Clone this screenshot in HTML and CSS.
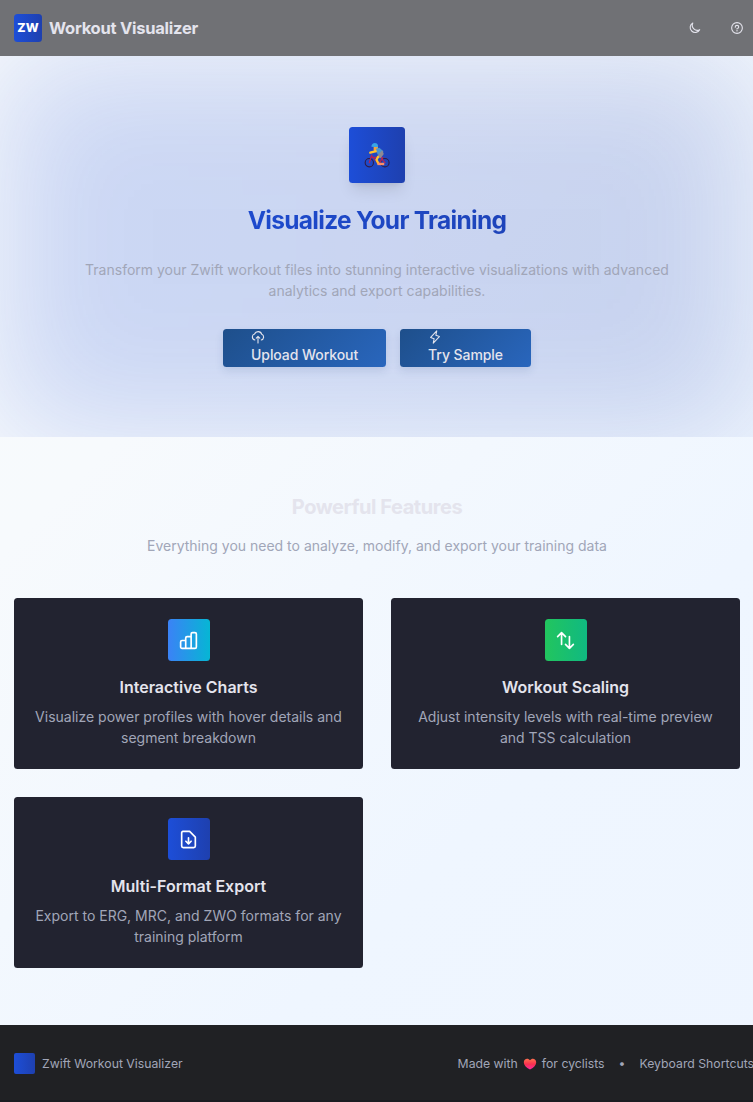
FILE: index.html
```html
<!DOCTYPE html>
<html lang="en">
<head>
<meta charset="utf-8">
<title>Workout Visualizer</title>
<link rel="stylesheet" href="styles.css">
</head>
<body>
<header class="topbar">
  <div class="brand"><span class="logo">ZW</span><span class="brand-name">Workout Visualizer</span></div>
  <nav class="actions">
    <svg class="icon-sm" viewBox="0 0 256 256"><path d="M88 36a92 92 0 0 0 126 122A92 92 0 1 1 88 36Z"/></svg>
    <svg class="icon-sm" viewBox="0 0 256 256"><circle cx="128" cy="128" r="98"/><path d="M128 144v-8c18 0 32-13 32-28s-14-28-32-28-32 13-32 28v4"/><circle cx="128" cy="178" r="5"/></svg>
  </nav>
</header>
<main>
  <section class="hero">
    <div class="hero-glow"></div>
    <div class="hero-content">
      <div class="hero-badge">
        <svg class="cyclist" viewBox="0 0 28 28">
          <g fill="none" stroke="#321b41" stroke-width="1.1"><circle cx="5.500" cy="21.500" r="4.300"/><circle cx="21.700" cy="21.500" r="4.300"/></g>
          <path d="M5.500 21.500 8 13.500M8.500 15l7 8 4-7M8.500 16h9l4.200 5.500" fill="none" stroke="#b52355" stroke-width="1.3"/>
          <path d="M10 5h4.500v4l-2 2-2.500-2.500z" fill="#f5a33b"/>
          <path d="M12.500 9.500 6.500 11" stroke="#ffc12e" stroke-width="2.4"/>
          <path d="m12.500 7 3.500-1 4 3.500-1 4.500-5-1z" fill="#4a94cf"/>
          <path d="m19 8.500 1.500 4-3 4-4-.5 1-2.500z" fill="#8d8992"/>
          <path d="m14.500 15.500-1.500 3 2 4" fill="none" stroke="#ffc12e" stroke-width="2.4"/>
          <path d="M14 21.500h7V24h-7z" fill="#ff8d65"/>
          <path d="M7.700 5C7.500.5 13.500-.3 14.500 3.500v2z" fill="#38a5e7"/>
        </svg>
      </div>
      <h1>Visualize Your Training</h1>
      <p class="hero-text">Transform your Zwift workout files into stunning interactive visualizations with advanced analytics and export capabilities.</p>
      <div class="buttons">
        <button class="btn"><svg class="icon-sm" viewBox="0 0 256 256"><path d="M72 182a56 56 0 0 1-7-109 70 70 0 0 1 132 6 54 54 0 0 1-11 103M128 238V116M96 148l32-32 32 32"/></svg><span>Upload Workout</span></button>
        <button class="btn"><svg class="icon-sm" viewBox="0 0 256 256"><path d="m96 240 16-80-64-24L160 16l-16 80 64 24Z"/></svg><span>Try Sample</span></button>
      </div>
    </div>
  </section>
  <section class="features">
    <h2>Powerful Features</h2>
    <p class="lead">Everything you need to analyze, modify, and export your training data</p>
    <div class="grid">
      <article class="card">
        <div class="tile tile-cyan"><svg class="icon" viewBox="0 0 24 24"><path d="M3 13.600C3 12.700 3.700 12 4.600 12H8.800v9H4.600C3.700 21 3 20.300 3 19.400zM8.800 9c0-.9.7-1.500 1.500-1.500H15V21H8.800zM15 4.600c0-.9.7-1.600 1.600-1.600h2.800c.9 0 1.600.7 1.600 1.600v14.800c0 .9-.7 1.600-1.600 1.600H15z"/></svg></div>
        <h3>Interactive Charts</h3>
        <p>Visualize power profiles with hover details and segment breakdown</p>
      </article>
      <article class="card">
        <div class="tile tile-green"><svg class="icon" viewBox="0 0 24 24"><path d="M3 7.500 7.500 3 12 7.500M7.500 3v13.500M21 16.500 16.500 21 12 16.500M16.500 21V7.500"/></svg></div>
        <h3>Workout Scaling</h3>
        <p>Adjust intensity levels with real-time preview and TSS calculation</p>
      </article>
      <article class="card">
        <div class="tile tile-blue"><svg class="icon" viewBox="0 0 24 24"><path d="M5.600 2.800h7.700l6.500 6.500v10.200c0 1-.7 1.800-1.800 1.800H6c-1 0-1.800-.8-1.800-1.800V4.200c0-.8.6-1.400 1.400-1.400zM12 10v7M9 14l3 3 3-3"/></svg></div>
        <h3>Multi-Format Export</h3>
        <p>Export to ERG, MRC, and ZWO formats for any training platform</p>
      </article>
    </div>
  </section>
</main>
<footer class="footer">
  <div class="foot-brand"><span class="foot-logo"></span><span>Zwift Workout Visualizer</span></div>
  <div class="foot-links">
    <span class="made">Made with <svg class="heart" viewBox="0 0 14 12"><defs><linearGradient id="h" x2="0" y2="1"><stop stop-color="#ff704f"/><stop offset=".5" stop-color="#f8314e"/><stop offset="1" stop-color="#fb28a5"/></linearGradient></defs><path d="M7 11.600C3 9.500.8 7 .8 4.200.8.400 5.300-.4 7 2.300 8.700-.4 13.200.4 13.200 4.200 13.200 7 11 9.500 7 11.600Z" fill="url(#h)"/></svg> for cyclists</span>
    <span>•</span>
    <span>Keyboard Shortcuts</span>
  </div>
</footer>
</body>
</html>
```
FILE: styles.css
```css
* { box-sizing: border-box; }
html { font-size: 14px; overflow: hidden; }
body {
  margin: 0;
  width: 754px;
  min-height: 1102px;
  overflow: hidden;
  font-family: Inter, "Liberation Sans", sans-serif;
  line-height: 21px;
  background: linear-gradient(135deg, #f8fafc 0%, #f7fafd 30%, #eff6ff 70%, #eef5ff 100%);
}
h1, h2, h3, p { margin: 0; }
svg { display: block; fill: none; stroke: currentColor; stroke-linecap: round; stroke-linejoin: round; }
.topbar {
  height: 56px;
  padding: 0 10px 0 14px;
  display: flex;
  align-items: center;
  justify-content: space-between;
  background: #707175;
  color: #e4e4ed;
}
.brand { display: flex; align-items: center; gap: 7px; }
.logo {
  width: 28px; height: 28px;
  display: grid; place-items: center;
  padding-bottom: 1px;
  border-radius: 3.5px;
  background: linear-gradient(90deg, #1d4ed8, #1e40af);
  color: #fff;
  font-size: 12.25px;
  font-weight: 800;
}
.brand-name { font-size: 16.5px; font-weight: 700; letter-spacing: -0.25px; }
.actions { display: flex; gap: 28px; }
.icon-sm { width: 14px; height: 14px; stroke-width: 20; }
.hero { position: relative; height: 381px; overflow: hidden; padding-top: 71px; }
.hero-glow {
  position: absolute;
  inset: 0;
  background: linear-gradient(90deg, #1d4ed8, #1e40af);
  opacity: .2;
  filter: blur(64px);
}
.hero-content { position: relative; display: flex; flex-direction: column; align-items: center; text-align: center; }
.hero-badge {
  width: 56px; height: 56px;
  display: grid; place-items: center;
  border-radius: 3.5px;
  background: linear-gradient(90deg, #1d4ed8, #1e40af);
  box-shadow: 0 10px 15px -3px rgba(0,0,0,.1), 0 4px 6px -4px rgba(0,0,0,.1);
}
.cyclist { width: 27px; height: 27px; stroke: none; }
h1 {
  margin-top: 21px;
  font-size: 24.5px;
  line-height: 32px;
  font-weight: 700;
  letter-spacing: -0.7px;
  color: transparent;
  background: linear-gradient(90deg, #1d4ed8 -60%, #1e40af 160%);
  background-clip: text;
}
.hero-text { width: 588px; margin-top: 23px; font-size: 14px; color: #a1a6b8; }
.buttons { display: flex; gap: 14px; margin-top: 28px; }
.btn {
  height: 38px;
  padding: 0 28px 2px;
  border: 0;
  border-radius: 3.5px;
  background: linear-gradient(135deg, #1e4f8b, #2966bd);
  box-shadow: 0 4px 8px rgba(30,64,120,.12);
  color: #e4e4ed;
  font: 450 14px/21px Inter, sans-serif;
  letter-spacing: -0.07px;
  text-align: left;
  white-space: nowrap;
}
.features { height: 588px; padding: 56px 14px 0; text-align: center; }
h2 { font-size: 20px; line-height: 28px; font-weight: 700; letter-spacing: -0.45px; color: #e4e4ed; }
.lead { margin-top: 14px; color: #a1a6b8; }
.grid { display: grid; grid-template-columns: 1fr 1fr; gap: 28px; margin-top: 42px; }
.card {
  height: 171px;
  padding: 21px 20px;
  display: flex;
  flex-direction: column;
  align-items: center;
  border-radius: 3.5px;
  background: #222330;
  color: #a1a6b8;
}
.tile { flex: none; width: 42px; height: 42px; display: grid; place-items: center; border-radius: 3.5px; color: #fff; }
.tile-cyan { background: linear-gradient(90deg, #3b82f6, #06b6d4); }
.tile-green { background: linear-gradient(90deg, #22c55e, #10b981); }
.tile-blue { background: linear-gradient(90deg, #1d4ed8, #1e40af); }
.icon { width: 21px; height: 21px; stroke-width: 1.9; }
h3 { margin: 14px 0 7px; font-size: 16px; line-height: 24px; font-weight: 600; color: #e4e4ed; }
.card p { line-height: 21px; }
.footer {
  height: 77px;
  padding: 2px 14px 0;
  display: flex;
  align-items: center;
  justify-content: space-between;
  background: #202124;
  border-bottom: 2px solid #1a1b20;
  color: #a1a6b8;
  font-size: 12.25px;
  white-space: nowrap;
}
.foot-brand { display: flex; align-items: center; gap: 7px; }
.foot-logo { width: 21px; height: 21px; border-radius: 2px; background: linear-gradient(90deg, #1d4ed8, #1e40af); }
.foot-links { display: flex; gap: 14px; margin-right: -14px; }
.made { display: flex; align-items: center; gap: 5px; }
.heart { width: 14px; height: 12px; stroke: none; }
```
